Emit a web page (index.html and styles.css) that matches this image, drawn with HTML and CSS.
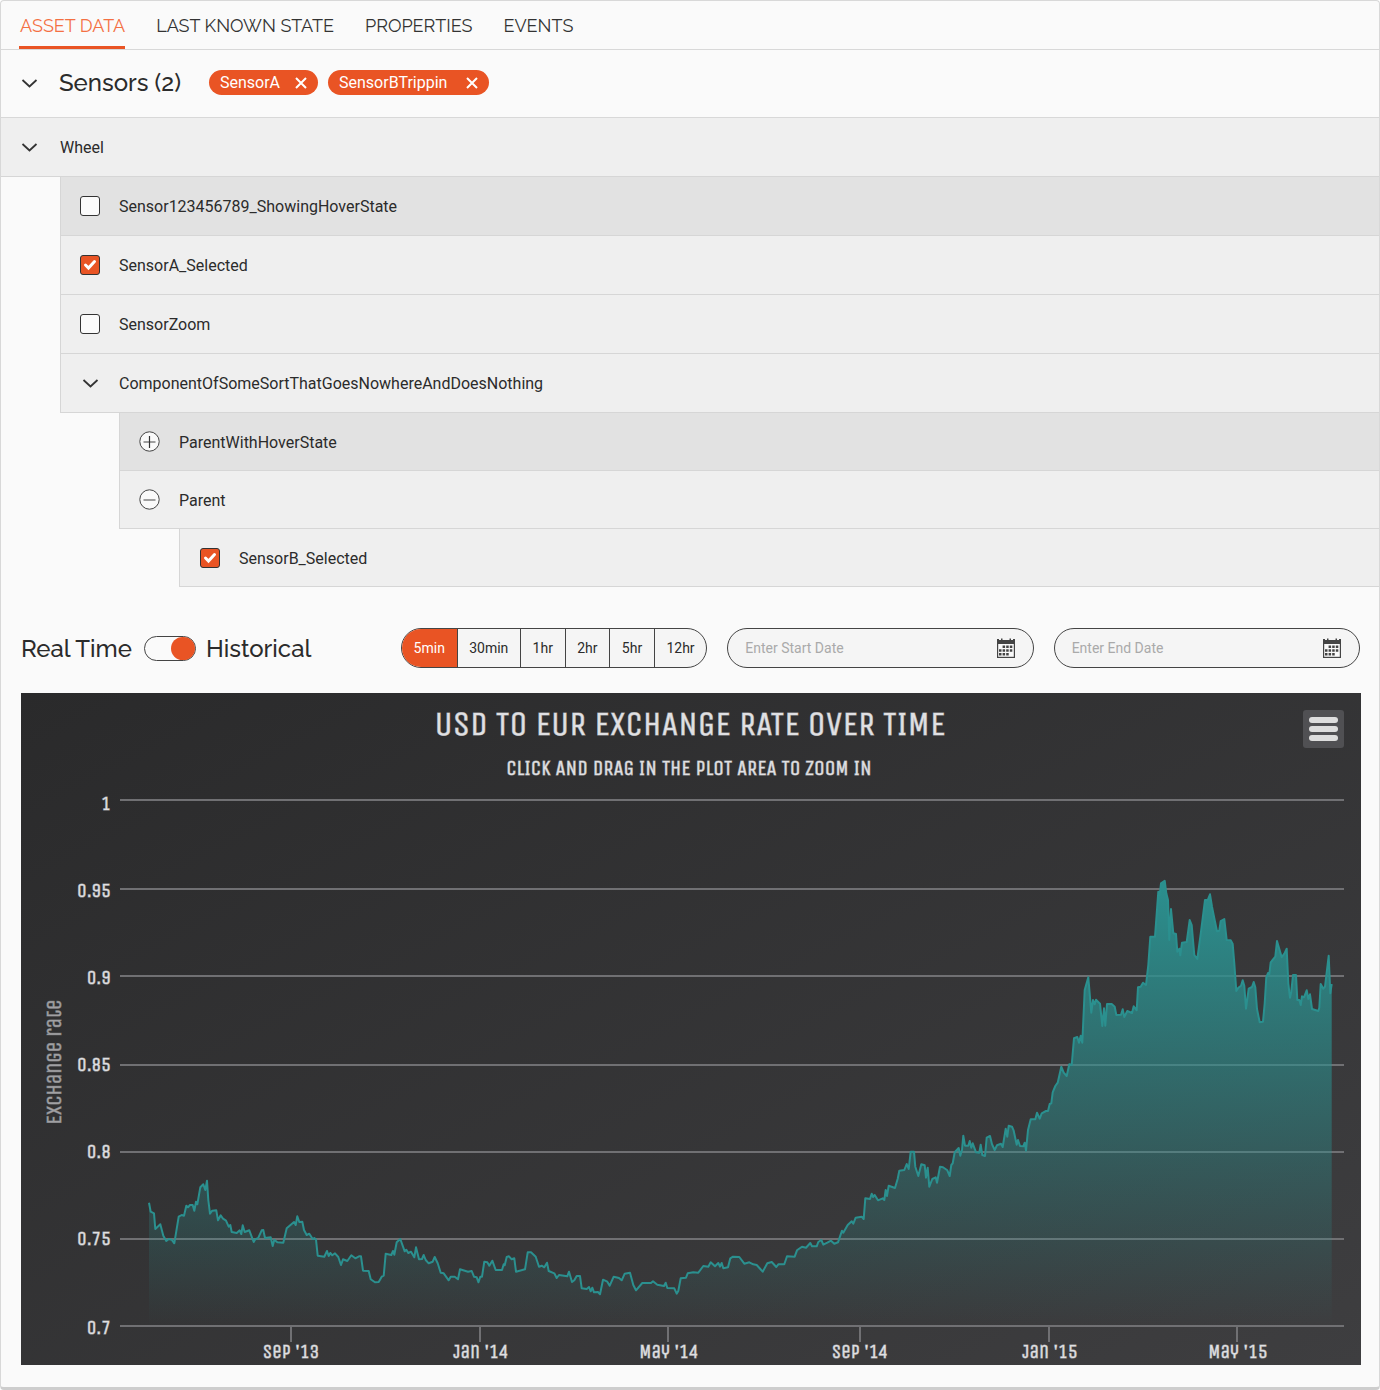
FILE: index.html
```html
<!DOCTYPE html>
<html lang="en">
<head>
<meta charset="utf-8">
<meta name="viewport" content="width=device-width, initial-scale=1">
<title>Asset Data</title>
<link rel="stylesheet" href="styles.css">
</head>
<body>
<svg class="sprite" aria-hidden="true">
  <symbol id="chevron" viewBox="0 0 20 20"><path d="M3.500 7l7 6.500 7-6.500" fill="none" stroke="#333" stroke-width="1.8"/></symbol>
  <symbol id="close" viewBox="0 0 12 12"><path d="M1 1l10 10M11 1L1 11" fill="none" stroke="#fff" stroke-width="2"/></symbol>
  <symbol id="plus" viewBox="0 0 22 22"><circle cx="11.500" cy="10.500" r="9.7" fill="#fafafa" stroke="#444"/><path d="M5.500 11h12" stroke="#777" stroke-width="1.4"/><path d="M11.500 5v12" stroke="#333" stroke-width="1.2"/></symbol>
  <symbol id="minus" viewBox="0 0 22 22"><circle cx="11.500" cy="10.500" r="9.7" fill="#fafafa" stroke="#444"/><path d="M5.500 11h12" stroke="#777" stroke-width="1.4"/></symbol>
  <symbol id="calendar" viewBox="0 0 20 20">
    <path d="M1 1h2v1h2V0.500h1.500V2h7V.5H15V2h2V1h2v19H1z" fill="#444"/>
    <path d="M2.200 6h15.600v12.800H2.200z" fill="#fafafa"/>
    <path d="M6.600 7.500h2.500V10H6.600zM10.200 7.500h2.500V10h-2.500zM13.800 7.500h2.500V10h-2.500zM3 11.200h2.500v2.500H3zM6.600 11.200h2.500v2.500H6.600zM10.200 11.200h2.500v2.500h-2.500zM13.800 11.200h2.500v2.500h-2.500zM3 15h2.500v2.500H3zM6.600 15h2.500v2.500H6.600zM10.200 15h2.500v2.500h-2.500z" fill="#444"/>
  </symbol>
</svg>
<main class="panel">
  <nav class="tabs" aria-label="Asset sections">
    <a class="tab tab-active" href="#asset-data" aria-current="page">ASSET DATA</a>
    <a class="tab" href="#last-known-state">LAST KNOWN STATE</a>
    <a class="tab" href="#properties">PROPERTIES</a>
    <a class="tab" href="#events">EVENTS</a>
  </nav>

  <header class="sensors">
    <button class="icon-button" aria-label="Collapse sensors"><svg class="icon"><use href="#chevron"/></svg></button>
    <h1 class="heading">Sensors (2)</h1>
    <div class="pills">
      <span class="pill">SensorA<button class="pill-close" aria-label="Remove SensorA"><svg class="icon-close"><use href="#close"/></svg></button></span>
      <span class="pill pill-wide">SensorBTrippin<button class="pill-close" aria-label="Remove SensorBTrippin"><svg class="icon-close"><use href="#close"/></svg></button></span>
    </div>
  </header>

  <div class="row row-root">
    <button class="icon-button" aria-label="Collapse Wheel"><svg class="icon"><use href="#chevron"/></svg></button>
    <span class="name">Wheel</span>
  </div>
  <ul class="branch">
    <li><label class="row row-hover"><input class="check" type="checkbox"><span class="name">Sensor123456789_ShowingHoverState</span></label></li>
    <li><label class="row"><input class="check" type="checkbox" checked><span class="name">SensorA_Selected</span></label></li>
    <li><label class="row"><input class="check" type="checkbox"><span class="name">SensorZoom</span></label></li>
    <li>
      <div class="row">
        <button class="icon-button" aria-label="Collapse component"><svg class="icon"><use href="#chevron"/></svg></button>
        <span class="name">ComponentOfSomeSortThatGoesNowhereAndDoesNothing</span>
      </div>
      <ul class="branch branch-compact">
        <li><div class="row row-parent row-hover">
          <button class="icon-button" aria-label="Expand ParentWithHoverState"><svg class="icon-round"><use href="#plus"/></svg></button>
          <span class="name">ParentWithHoverState</span>
        </div></li>
        <li>
          <div class="row row-parent">
            <button class="icon-button" aria-label="Collapse Parent"><svg class="icon-round"><use href="#minus"/></svg></button>
            <span class="name">Parent</span>
          </div>
          <ul class="branch branch-leaf">
            <li><label class="row"><input class="check" type="checkbox" checked><span class="name">SensorB_Selected</span></label></li>
          </ul>
        </li>
      </ul>
    </li>
  </ul>

  <div class="controls">
    <label class="mode"><span class="name">Real Time</span><input class="switch" type="checkbox" role="switch" checked><span class="name">Historical</span></label>
    <div class="ranges" role="group" aria-label="Interval">
      <button class="range range-active">5min</button>
      <button class="range">30min</button>
      <button class="range">1hr</button>
      <button class="range">2hr</button>
      <button class="range">5hr</button>
      <button class="range">12hr</button>
    </div>
    <label class="date"><input class="date-input" type="text" placeholder="Enter Start Date" aria-label="Start date"><svg class="icon"><use href="#calendar"/></svg></label>
    <label class="date"><input class="date-input" type="text" placeholder="Enter End Date" aria-label="End date"><svg class="icon"><use href="#calendar"/></svg></label>
  </div>

  <section class="chart" aria-label="USD to EUR exchange rate over time">
    <svg class="plot" viewBox="21 693 1340 672">
      <defs>
        <linearGradient id="backdrop" x1="0" y1="0" x2="1" y2="1"><stop offset="0" stop-color="#2a2a2b"/><stop offset="1" stop-color="#3e3e40"/></linearGradient>
        <linearGradient id="fill" gradientUnits="userSpaceOnUse" x1="0" y1="881" x2="0" y2="1326"><stop offset="0" stop-color="#2b908f" stop-opacity="1"/><stop offset="1" stop-color="#2b908f" stop-opacity="0"/></linearGradient>
      </defs>
      <rect x="21" y="693" width="1340" height="672" fill="url(#backdrop)"/>
      <text class="chart-title" x="690" y="735">USD TO EUR EXCHANGE RATE OVER TIME</text>
      <text class="chart-subtitle" x="689" y="775">CLICK AND DRAG IN THE PLOT AREA TO ZOOM IN</text>
      <path class="grid" d="M120 800h1224M120 889h1224M120 976h1224M120 1065h1224M120 1152h1224M120 1239h1224M120 1326h1224M291 1326v16M480 1326v16M668 1326v16M860 1326v16M1049 1326v16M1237 1326v16"/>
      <path id="area" fill="url(#fill)"/>
      <polyline id="rate" class="rate" points="149,1202.7 150.7,1211.7 154,1213.3 155.3,1229 160.3,1224.3 163.3,1235.7 166.3,1241 168.7,1239 171.7,1239.7 174.3,1243.3 178.7,1216.7 181.7,1215 184,1215.7 186.3,1205.7 188,1207.3 190,1205 192.7,1205 194.3,1210.7 196,1201.7 197.3,1204.3 200.3,1187.3 203.3,1184.3 205.3,1190 207,1180.7 208.3,1200 210,1213.7 212.3,1210.7 216.3,1210.3 218,1220.3 220.7,1215.3 223,1218.7 226,1220.7 228.7,1226.7 230.3,1225 231.7,1232 236.7,1233 239.7,1230.3 241.3,1234 242.7,1225.3 244.7,1232 249.3,1230.3 253.7,1242 255.3,1239.3 258,1238.3 261.7,1230.3 263.3,1230 265,1238 270.7,1237.3 272.7,1246 274.3,1239.7 277.3,1242.3 283.3,1242.7 286.7,1228.3 294,1222 295.7,1225 297.3,1216.3 299.3,1222 302.3,1221.7 304,1230 306.7,1235 309.3,1233.7 312.7,1239 314.3,1238 316,1239.7 317.7,1255.7 324.3,1256.7 327,1251 328.7,1256 330.3,1253 332.3,1255.3 335,1253.3 338.3,1257 341,1265 343,1259.3 347.3,1261 351.3,1255.3 355.3,1258.3 359,1256.3 361,1256.3 363,1270.7 368.7,1271 370.7,1279.3 375,1282.3 378.7,1282 381.7,1276.7 383.7,1275.7 385.7,1253.7 391.3,1255 393,1251 394.3,1254.7 396.7,1242.3 400.3,1239 404.7,1251.3 406.3,1249.7 408.3,1253 411,1251.7 414.3,1257.3 416,1247.3 419,1259.3 422,1259 423.7,1255 425.7,1260 428.7,1263.3 432.7,1261.7 434.7,1257 437.7,1263.3 440.7,1272.7 443.7,1273.3 448.7,1280.3 450.7,1276.7 454.7,1276.7 458,1279.3 460,1269.3 468,1271.7 471.7,1271 474,1276.7 476.7,1277.3 478.5,1282.3 480.3,1276.7 482,1276.7 484.3,1261.7 487.3,1262.3 489.3,1265.7 492.3,1260.7 495.7,1270 502,1270 503.7,1264.3 504.7,1265.3 506.7,1257 509,1256.3 511.7,1259.3 514.3,1258.3 516,1271.7 525,1269.3 527.7,1252.3 531,1252.3 535.7,1256.7 539,1266.7 541.7,1265.7 544.3,1267.3 547,1262.7 548.7,1271 554.3,1273.3 556.7,1278 559,1275 567.3,1276.3 569,1271.7 572,1282 574.3,1280.3 576.7,1276 580,1276 581.7,1288.3 586.7,1289 589,1287 590.7,1291.3 592.3,1287.7 594,1292.3 598,1292 600,1294.3 603,1279.7 607.3,1281.7 609.7,1285.7 613.7,1276.7 619,1278 621.7,1280.3 624.7,1273.7 630,1272.7 633.3,1285 636,1290.3 642.3,1283 651,1283 653,1281.3 657.3,1284.7 664,1286 665.7,1282.7 667.3,1288 674.3,1288.3 676.7,1293.7 678.3,1291 680.7,1278.3 686,1277.7 687.7,1273.3 693.3,1272.3 698.3,1272.7 703.3,1266 708.3,1266.7 710.7,1262.3 715,1266.3 718.3,1263 720,1266.7 721.7,1263 723.3,1268.3 728,1267.3 730.3,1258.3 733,1256.7 739.3,1257 744.3,1263.7 749.3,1262.3 753.3,1264.3 756.7,1265 762.7,1271.7 767.3,1263.3 771.7,1262 776.3,1267 778.3,1264.3 784.3,1264.3 787,1256.3 794.7,1256.7 797,1250.3 802,1246.7 806,1247.7 810.3,1243 812,1246.3 816.7,1246.3 818.3,1242 821.3,1240 823.3,1244.7 827.3,1242.7 831,1240.7 834.3,1243.8 838,1242.3 842,1230.7 843.3,1232.7 847.7,1225 851.7,1221.3 853.3,1223.7 855.7,1217.7 861.7,1216.7 863.7,1219 865.3,1198.3 870,1199 871.7,1193.7 873,1197 874.7,1195 878,1200.3 882.7,1198.3 884.3,1200 885.7,1190 887,1196 888.7,1185.7 895,1188 897.7,1178.7 899.3,1170.7 904.3,1170 906.7,1164 908.7,1169 910.7,1151.7 914,1151.7 915.3,1166.7 918.3,1176 921.3,1164.3 924.7,1165.3 926,1177.7 927.7,1167.7 929.3,1186.7 932.3,1179 935.7,1177.3 937,1182.7 940,1166.7 943,1167.3 947.3,1170.3 949.7,1176 951.3,1165 952.7,1163.3 954.7,1152.3 958.7,1148 960.3,1155.7 962,1150 963.3,1135.7 965,1145.7 968.3,1145.7 969.7,1141 971.3,1147.7 972.7,1143.3 976,1152.3 979.3,1152.7 980.7,1144.7 982.3,1155 985,1156 986.7,1137.7 990,1136 992,1144.3 994.7,1150 997,1145.3 1001,1143.7 1002.7,1147 1005.7,1128.7 1007.3,1136.7 1008.7,1125.7 1012,1126.7 1013.7,1130.7 1016.7,1144.7 1018,1140 1020,1146 1023.3,1146.3 1024.7,1142.7 1026,1150.7 1028,1130 1030.7,1119.3 1035.3,1119.3 1037,1112.7 1039.7,1118.7 1041.7,1113.3 1046,1111 1048,1111 1049.7,1104 1051.3,1103.3 1052.7,1092.3 1055.3,1086 1057.7,1082.7 1061.3,1066.7 1063.7,1072.7 1066.7,1076 1069.3,1064.3 1071.7,1065 1074,1038.3 1077.3,1037 1079,1042.7 1080.7,1035.7 1082.3,1042.7 1084.7,990 1088.3,977.3 1091.3,1012.7 1093,1000 1094.7,1004.3 1096,999.7 1100,1003.7 1102.3,1026 1104,1008.3 1105.3,1025.7 1107,1004 1111.7,1004 1114.7,1006.7 1116.3,1015 1121,1014.7 1122.7,1009.3 1124.3,1017 1127.3,1011 1132,1013 1133.7,1006.3 1136.7,1010.3 1138,987.3 1140.7,986.7 1143,982.7 1146,985 1148.3,965 1150.3,936.7 1155,936.7 1158.3,891.7 1159.7,895 1161,883.3 1164.7,880.7 1166.3,893.3 1168,900 1169.3,940 1171,909 1173.3,933.3 1176,934 1177.3,951.7 1179.3,948.7 1180.3,955.3 1182,942.7 1186.7,942 1189.7,920 1191.7,925 1194.3,955 1197.3,959 1201,931.7 1205,900 1207.7,900 1210,894.3 1212,906.7 1214.3,918.3 1217,931.3 1219.3,930.7 1220.7,921 1224.3,919 1226.7,940 1230.7,940.3 1232.7,944 1234.3,963.3 1236.3,991 1238.3,987.7 1241,985.7 1242.7,980.3 1244.3,985.7 1246,1008.7 1248.7,988.7 1252,987 1253.7,982 1255.3,987.3 1257,1009 1259.7,1022.3 1263,1021.7 1264.7,1003.3 1266.3,977.3 1268,973 1269.3,974.3 1270.7,962.3 1275.3,956.7 1277,941 1281.7,957.3 1284.7,953 1286.7,948.7 1288.3,983.3 1290,997.7 1291.3,991.7 1293,975 1296,975 1297.3,1000 1299.3,1000 1300.7,1005 1302,996.3 1304,997.3 1306.7,990.3 1308.3,999 1310,994.3 1312,1009 1318.3,1011 1319.3,1007.7 1320.7,984 1323.3,988.7 1325,986.7 1328.7,955.7 1330.3,993.3 1331.7,984"/>
      <g class="axis axis-y">
        <text x="111" y="810">1</text><text x="111" y="897">0.95</text><text x="111" y="984">0.9</text><text x="111" y="1071">0.85</text><text x="111" y="1158">0.8</text><text x="111" y="1245">0.75</text><text x="111" y="1334">0.7</text>
      </g>
      <g class="axis axis-x">
        <text x="291" y="1358">Sep '13</text><text x="481" y="1358">Jan '14</text><text x="669" y="1358">May '14</text><text x="860" y="1358">Sep '14</text><text x="1050" y="1358">Jan '15</text><text x="1238" y="1358">May '15</text>
      </g>
      <text class="axis-title" transform="translate(61 1062) rotate(-90)">Exchange rate</text>
    </svg>
    <button class="menu" aria-label="Chart menu"><span class="bar"></span><span class="bar"></span><span class="bar"></span></button>
  </section>
</main>
<script src="chart.js"></script>
</body>
</html>
```
FILE: styles.css
```css
* { box-sizing: border-box; }
body { margin: 0; background: #fff; color: #2b2b2b; font: 16px/20px Roboto, sans-serif; }
button, input { font: inherit; color: inherit; margin: 0; }
button { padding: 0; border: 0; background: none; cursor: pointer; }
ul { list-style: none; margin: 0; padding: 0; }
.sprite { position: absolute; width: 0; height: 0; }
.panel { background: #fafafa; border: 1px solid #d8d8d8; border-bottom: 3px solid #cdcdcd; border-radius: 4px; }

.tabs { display: flex; gap: 31px; height: 49px; padding-left: 18px; border-bottom: 1px solid #d8d8d8; font: 18px/50px Raleway, Lato, sans-serif; }
.tab { color: #333; text-decoration: none; }
.tab-active { color: #f47043; padding-left: 1px; border-bottom: 3px solid #e95424; }

.sensors { display: flex; align-items: center; height: 68px; padding: 0 18px 2px; border-bottom: 1px solid #d8d8d8; }
.heading { margin: 0 28px 0 20px; font: 500 24px/32px Raleway, Lato, sans-serif; }
.pills { display: flex; gap: 10px; }
.pill { display: flex; align-items: center; gap: 15px; height: 25px; padding: 0 11px; border-radius: 13px; background: #e95424; color: #fff; }
.pill-wide { gap: 19px; }
.pill-close, .icon-close { display: block; width: 12px; height: 12px; }

.row { display: flex; align-items: center; gap: 19px; height: 59px; padding-left: 19px; background: #efefef; border-bottom: 1px solid #d6d6d6; }
.row-root { gap: 21px; padding-left: 18px; }
.row-parent { gap: 20px; }
.row-hover { background: #e2e2e2; }
.name { padding-top: 2px; }
.branch { margin-left: 59px; }
.branch .row { border-left: 1px solid #d6d6d6; }
.branch-compact .row { height: 58px; }
.branch-leaf { margin-left: 60px; }
.branch-leaf .row { padding-left: 20px; }
.icon-button { display: grid; place-items: center; place-content: center; width: 20px; height: 22px; }
.icon { display: block; width: 20px; height: 20px; }
.icon-round { display: block; width: 22px; height: 22px; }
.check { appearance: none; width: 20px; height: 20px; border: 1px solid #333; border-radius: 3px; background: #fafafa; }
.check:checked { background: #e95424 url("data:image/svg+xml,%3Csvg xmlns='http://www.w3.org/2000/svg' viewBox='0 0 18 18'%3E%3Cpath d='M4.500 9l3 3 6-6.500' fill='none' stroke='white' stroke-width='3' stroke-linecap='round'/%3E%3C/svg%3E") center / 18px 18px no-repeat; }

.controls { display: grid; grid-template-columns: 1.175fr 1fr 1fr 1fr; gap: 20px; align-items: center; padding: 41px 19px 25px 20px; }
.mode { display: flex; align-items: center; font: 500 24px/32px Raleway, Lato, sans-serif; white-space: nowrap; }
.switch { appearance: none; display: flex; justify-content: flex-end; width: 52px; height: 25px; margin: 0 10px 0 12px; border: 1px solid #444; border-radius: 13px; background: #fafafa; }
.switch::before { content: ""; width: 24px; height: 23px; border-radius: 12px; background: #e95424; }
.ranges { display: flex; height: 40px; border: 1px solid #444; border-radius: 20px; background: #f5f5f5; overflow: hidden; font-size: 14px; }
.range { flex: 1 1 auto; padding: 0 10px; }
.range + .range { border-left: 1px solid #444; }
.range-active { background: #e95424; color: #fff; }
.date { display: flex; align-items: center; height: 40px; padding: 0 17px; border: 1px solid #444; border-radius: 20px; background: #f5f5f5; }
.date-input { flex: 1; min-width: 0; padding: 0; border: 0; outline: 0; background: none; font-size: 14px; }
.date-input::placeholder { color: #aaa; opacity: 1; }

.chart { position: relative; margin: 0 18px 22px 20px; font-family: "Unica One", "Roboto Condensed", "Liberation Sans Narrow", sans-serif; }
.plot { display: block; width: 100%; height: auto; }
.plot text { stroke-width: 1px; stroke-opacity: 0.6; }
.chart-title { font-size: 35px; fill: #e0e0e3; stroke: #e0e0e3; text-anchor: middle; }
.chart-subtitle { font-size: 21px; fill: #e0e0e3; stroke: #e0e0e3; text-anchor: middle; }
.grid { fill: none; stroke: #707073; stroke-width: 2; }
.rate { fill: none; stroke: #2b908f; stroke-width: 2; stroke-linejoin: round; }
.axis { font-size: 19px; fill: #e0e0e3; stroke: #e0e0e3; }
.axis-y { text-anchor: end; }
.axis-x { text-anchor: middle; }
.axis-title { font-size: 21px; fill: #a0a0a3; stroke: #a0a0a3; text-anchor: middle; }
.menu { position: absolute; top: 17px; right: 17px; display: grid; align-content: center; justify-items: center; gap: 3px; width: 41px; height: 38px; border-radius: 3px; background: #505053; }
.bar { width: 29px; height: 6px; border-radius: 3px; background: #ddd; }
```
FILE: chart.js
```js
// Close the rate line down to the axis to form the shaded area.
const points = document.getElementById("rate").getAttribute("points");
document.getElementById("area").setAttribute("d", `M149 1326L${points}V1326Z`);
```
